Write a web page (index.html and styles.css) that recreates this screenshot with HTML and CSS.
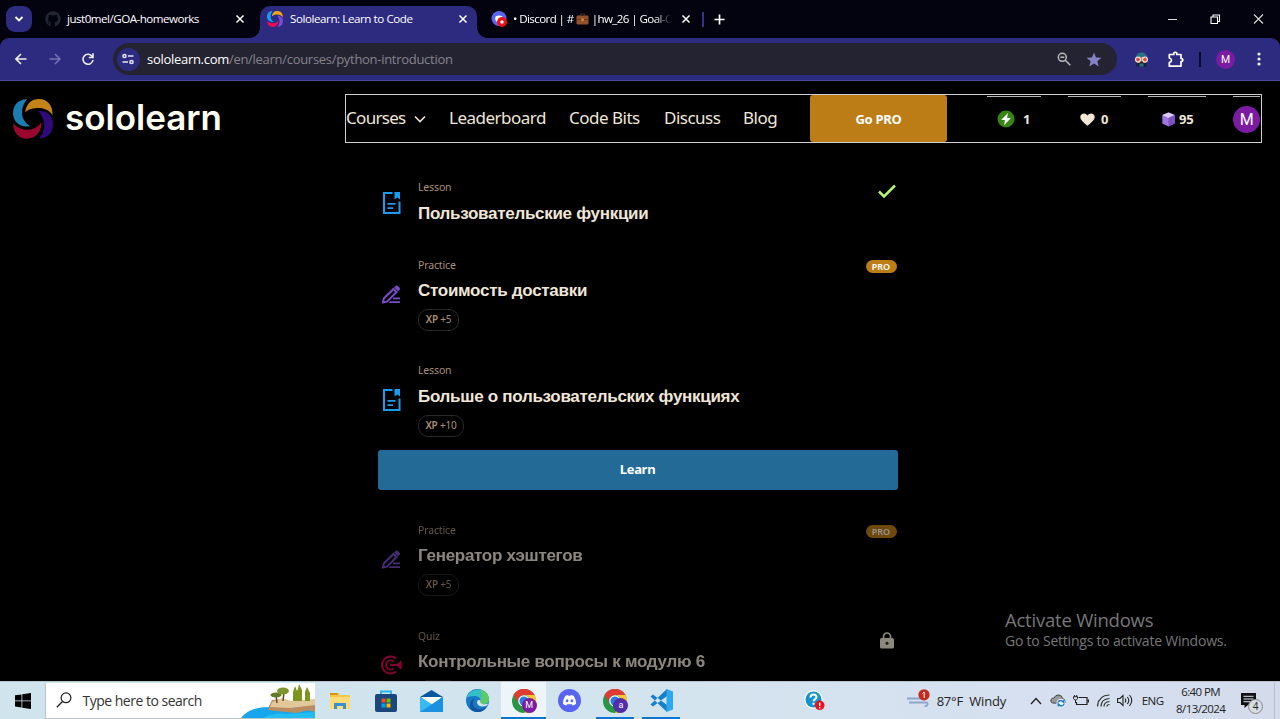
FILE: index.html
```html
<!DOCTYPE html>
<html lang="en">
<head>
<meta charset="utf-8">
<title>Sololearn: Learn to Code</title>
<link rel="stylesheet" href="styles.css">
</head>
<body>
<svg class="defs" width="0" height="0">
  <defs>
    <symbol id="swirl" viewBox="0 0 40 40">
      <path class="sw-a" d="M14 .3C5 0 0 7 0 14c0 9 8 15.500 17 13C11 23 9 18.500 9 13.500 9 8 11 4 14 .3z"/>
      <path class="sw-b" d="M12 13.500C13.500 4 19 0 26 0c9 0 14 7 13.500 16C36 11 31 9 26 9 20 9 15.500 10 12 13.500z"/>
      <path class="sw-c" d="M25 12C34 11 40 17 40 25c0 9-6 14.500-14 14.500C30.500 34 32 29 31 23.500 30 18 28 14.500 25 12z"/>
      <path class="sw-d" d="M0 24.500c5 5 11 6.700 16 6.200 5-.5 9.500-3 12.300-7.200C29 32 23 39.500 14 39.800 6 40 .5 33.500 0 24.500z"/>
    </symbol>
    <symbol id="close" viewBox="0 0 10 10"><path d="M1.500 1.500l7 7M8.500 1.500l-7 7" fill="none" stroke="currentColor" stroke-width="1.500"/></symbol>
    <symbol id="book" viewBox="0 0 18 22">
      <path d="M9.500 1H1v20h15.500V9.500" fill="none" stroke="currentColor" stroke-width="2"/>
      <path d="M11.500 0H17v7.500l-2.700-2-2.800 2zM4.500 11h8v1.800h-8zM4.500 15.200h5.500V17H4.500z" fill="currentColor"/>
    </symbol>
    <symbol id="pencil" viewBox="0 0 20 20">
      <path d="M2 17.500l.8-4L12.500 4 15.500 7 6 16.700z" fill="none" stroke="currentColor" stroke-width="2"/>
      <path d="M13 2.500L15 .7q.8-.6 1.600.1L18.800 3q.6.800 0 1.500L17 6.300zM12 12.500h7v1.800h-7zM9 16.200h10V18H7.500z" fill="currentColor"/>
    </symbol>
    <symbol id="chrome" viewBox="0 0 24 24">
      <circle cx="12" cy="12" r="12" fill="#279746"/>
      <path d="M1.500 6A12 12 0 0 1 22.500 6H12a6 6 0 0 0-5.500 8.500z" fill="#df3b32"/>
      <path d="M22.500 6A12 12 0 0 1 12 24l5.500-9.500A6 6 0 0 0 12 6z" fill="#fbc62d"/>
      <circle cx="12" cy="12" r="5.800" fill="#fff"/><circle cx="12" cy="12" r="4.600" fill="#2a7ae4"/>
    </symbol>
    <symbol id="discord" viewBox="0 0 24 24">
      <circle cx="12" cy="12" r="12" fill="#5865f2"/>
      <path d="M7.500 7.300q2-1 3-1l.5.8h2l.5-.8q1 0 3 1 2.500 4 2.300 8-1.500 1.500-3.500 1.900l-.8-1.400h-5l-.8 1.400q-2-.4-3.500-1.900-.2-4 2.300-8z" fill="#fff"/>
      <ellipse cx="9.500" cy="12.300" rx="1.400" ry="1.600" fill="#5865f2"/><ellipse cx="14.500" cy="12.300" rx="1.400" ry="1.600" fill="#5865f2"/>
    </symbol>
  </defs>
</svg>

<div class="screen">
  <header class="tabstrip">
    <div class="tab-search"><svg width="10" height="8" viewBox="0 0 10 8"><path d="M1.500 2l3.500 3.500L8.500 2" fill="none" stroke="#fff" stroke-width="1.800"/></svg></div>
    <div class="tab tab-github">
      <svg width="16" height="16" viewBox="0 0 16 16"><path fill="#20272f" d="M8 .3a7.700 7.700 0 0 0-2.500 15c.4.100.5-.2.500-.4v-1.500c-2 .4-2.600-.9-2.700-1.300-.2-.4-.6-1-.9-1.200.9-.2 1.400.5 1.700 1 .6 1 1.400.9 2 .6.100-.5.300-.8.500-1-1.800-.2-3.500-.9-3.500-3.700 0-.8.300-1.500.8-2-.1-.2-.4-1 .1-2 1 0 1.600.4 2.100.8a7 7 0 0 1 3.800 0c1.200-.8 2.100-.8 2.100-.8.500 1 .2 1.800.1 2 .5.500.8 1.200.8 2 0 2.900-1.700 3.500-3.500 3.700.3.300.5.700.5 1.500v1.900c0 .2.100.5.600.4A7.700 7.700 0 0 0 8 .3z"/></svg>
      <span class="tab-title t1">just0mel/GOA-homeworks</span>
      <svg class="x" width="10" height="10"><use href="#close"/></svg>
    </div>
    <div class="tab tab-active">
      <svg class="bright" width="16" height="16"><use href="#swirl"/></svg>
      <span class="tab-title t2">Sololearn: Learn to Code</span>
      <svg class="x" width="10" height="10"><use href="#close"/></svg>
    </div>
    <div class="tab tab-discord">
      <svg width="17" height="17" viewBox="0 0 17 17"><circle cx="8" cy="7.500" r="7.500" fill="#5865f2"/><path d="M4.500 5.500q3.500-2 7 0v3h-4v2H5q-1.500-2-.5-5z" fill="#fff"/><circle cx="11" cy="11" r="5" fill="#ed1016"/><circle cx="11" cy="11" r="1.700" fill="#fff"/></svg>
      <span class="tab-title t3">• Discord | #<svg class="case" width="13" height="12" viewBox="0 0 13 12"><path d="M4.500 2.500V1h4v1.500" fill="none" stroke="#4a2a1a" stroke-width="1"/><rect x=".5" y="2.500" width="12" height="9" rx="1.200" fill="#93512b"/><path d="M.5 6h12v1H.5z" fill="#6a3518"/><rect x="5.300" y="5.500" width="2.500" height="2.500" fill="#c98d3f"/></svg>|hw_26 | Goal-O</span>
      <svg class="x" width="10" height="10"><use href="#close"/></svg>
    </div>
    <span class="tab-sep"></span>
    <svg class="plus" width="11" height="11" viewBox="0 0 11 11"><path d="M5.500.5v10M.5 5.500h10" stroke="#fff" stroke-width="1.700"/></svg>
    <div class="win-controls">
      <svg width="11" height="11" viewBox="0 0 11 11"><path d="M1 5.500h9" stroke="#ddd"/></svg>
      <svg width="11" height="11" viewBox="0 0 11 11"><path d="M1 3h6.500v6.500H1zM3 3V1h6.500v6.500H7.500" fill="none" stroke="#fff" stroke-width="1.100"/></svg>
      <svg width="11" height="11" viewBox="0 0 11 11"><path d="M1 .5l9 9M10 .5l-9 9" stroke="#ddd" stroke-width="1.100"/></svg>
    </div>
  </header>

  <div class="toolbar">
    <div class="nav-buttons">
      <svg width="12" height="12" viewBox="0 0 12 12"><path d="M11.500 6H1.500M6 1L1 6l5 5" fill="none" stroke="#eee" stroke-width="1.600"/></svg>
      <svg width="12" height="12" viewBox="0 0 12 12"><path d="M.5 6h10M6 1l5 5-5 5" fill="none" stroke="#7773b3" stroke-width="1.500"/></svg>
      <svg width="12" height="12" viewBox="0 0 12 12"><path d="M10.200 3.500A5 5 0 1 0 11 7M11 .3V4.500H6.800" fill="none" stroke="#eee" stroke-width="1.600"/></svg>
    </div>
    <div class="omnibox">
      <span class="site-info"><svg width="12" height="12" viewBox="0 0 12 12" fill="none" stroke="#e6e6f5" stroke-width="1.500"><circle cx="2.500" cy="3" r="1.600"/><path d="M6 3h5.500M.5 9H6"/><circle cx="9.500" cy="9" r="1.600"/></svg></span>
      <span class="url"><b>sololearn.com</b>/en/learn/courses/python-introduction</span>
      <svg class="zoom" width="14" height="14" viewBox="0 0 14 14"><circle cx="5.300" cy="5.300" r="4" fill="none" stroke="#bbb" stroke-width="1.500"/><path d="M8.300 8.300l5 5M3.300 5.300h4" stroke="#bbb" stroke-width="1.500"/></svg>
      <svg class="star" width="16" height="15" viewBox="0 0 16 15"><path fill="#8583c5" d="M8 .5l2 5 5.500.3-4.200 3.500 1.400 5.200L8 11.600l-4.700 2.900 1.400-5.200L.5 5.800 6 5.500z"/></svg>
    </div>
    <svg class="ext" width="15" height="15" viewBox="0 0 15 15"><path d="M2 6Q2 .5 7.500.5T13 6z" fill="#2b7184"/><path d="M3 5h9v6H3z" fill="#c9875e"/><circle cx="4" cy="7.500" r="3" fill="#eee"/><circle cx="11" cy="7.500" r="3" fill="#eee"/><circle cx="4" cy="7.500" r="1.900" fill="#d95342"/><circle cx="11" cy="7.500" r="1.900" fill="#d95342"/><path d="M2.500 11l3 0 1-1.500h2l1 1.500 3 0v3.500h-10z" fill="#17202a"/><path d="M5.500 11.500h4v3h-4z" fill="#2b7184"/></svg>
    <svg class="puzzle" width="16" height="17" viewBox="0 0 16 17"><path d="M1.300 3.500H5.800Q5.500 1.300 7.300 1.300T8.800 3.500H13V7.500q1.800 0 1.800 1.500T13 10.500v4.700H1.300V11.500q2.200-.5 2.200-2.200T1.300 7z" fill="none" stroke="#fff" stroke-width="1.700" stroke-linejoin="round"/></svg>
    <span class="tb-sep"></span>
    <span class="avatar sm">M</span>
    <svg class="dots" width="4" height="14" viewBox="0 0 4 14" fill="#eee"><circle cx="2" cy="2" r="1.600"/><circle cx="2" cy="7" r="1.600"/><circle cx="2" cy="12" r="1.600"/></svg>
  </div>

  <main class="page">
    <div class="site-head">
      <svg class="logo" width="40" height="40"><use href="#swirl"/></svg>
      <span class="wordmark">sololearn</span>
      <nav class="menu">
        <span class="m1">Courses</span>
        <svg class="chev" width="12" height="8" viewBox="0 0 12 8"><path d="M1 1.500l5 5 5-5" fill="none" stroke="#eee5d8" stroke-width="1.600"/></svg>
        <span class="m2">Leaderboard</span>
        <span class="m3">Code Bits</span>
        <span class="m4">Discuss</span>
        <span class="m5">Blog</span>
        <span class="gopro">Go PRO</span>
        <span class="stat s1"><svg width="18" height="18" viewBox="0 0 18 18"><circle cx="9" cy="9" r="8.500" fill="#388414"/><path d="M11 3L4.300 9.800l3.700.5L7 15.200l6.800-7-3.800-.5z" fill="#fff"/></svg>1</span>
        <span class="stat s2"><svg width="15" height="13" viewBox="0 0 15 13"><path fill="#f3e7d6" d="M7.500 12.800C3 9 .3 6.800.3 4 .3 0 5.500-.9 7.500 2.500 9.500-.9 14.700 0 14.700 4c0 2.800-2.700 5-7.200 8.800z"/></svg>0</span>
        <span class="stat s3"><svg width="13" height="15" viewBox="0 0 13 15"><path d="M6.500.5L12.700 3v8.500l-6.200 3-6.200-3V3z" fill="#9e75df"/><path d="M6.500.5L12.700 3 6.500 6 .3 3z" fill="#dccaf6"/><path d="M6.500 6l6.200-3v8.500l-6.200 3z" fill="#7d50c4"/></svg>95</span>
        <span class="stat s4"><span class="avatar lg">M</span></span>
      </nav>
    </div>

    <div class="lessons">
      <section class="item i1">
        <svg class="kind book" width="18" height="22"><use href="#book"/></svg>
        <div class="body"><small>Lesson</small><h3>Пользовательские функции</h3></div>
        <svg class="check" width="18" height="14" viewBox="0 0 18 14"><path d="M1 7.500l5 5L17 1.500" fill="none" stroke="#b6f471" stroke-width="2.500"/></svg>
      </section>
      <section class="item i2">
        <svg class="kind pencil" width="20" height="20"><use href="#pencil"/></svg>
        <div class="body"><small>Practice</small><h3>Стоимость доставки</h3><span class="xp"><b>XP</b> +5</span></div>
        <span class="pro">PRO</span>
      </section>
      <section class="item i3">
        <svg class="kind book" width="18" height="22"><use href="#book"/></svg>
        <div class="body"><small>Lesson</small><h3>Больше о пользовательских функциях</h3><span class="xp wide"><b>XP</b> +10</span></div>
      </section>
      <div class="learn">Learn</div>
      <section class="item i4 locked">
        <svg class="kind pencil" width="20" height="20"><use href="#pencil"/></svg>
        <div class="body"><small>Practice</small><h3>Генератор хэштегов</h3><span class="xp"><b>XP</b> +5</span></div>
        <span class="pro">PRO</span>
      </section>
      <section class="item i5 locked">
        <svg class="kind quiz" width="22" height="20" viewBox="0 0 22 20"><path d="M15 3.500A8.500 8.500 0 1 0 15 16.500M12.500 6.500A4.500 4.500 0 1 0 12.500 13.500M9 10h8" fill="none" stroke="currentColor" stroke-width="2"/><path d="M15 10l4.500-4.300 1 .3v2.500L22 9l-2 1 2 1-1.500.5V14l-1 .3z" fill="currentColor"/></svg>
        <div class="body"><small>Quiz</small><h3>Контрольные вопросы к модулю 6</h3><span class="xp-edge"></span></div>
        <svg class="lock" width="14" height="17" viewBox="0 0 14 17"><path d="M3.500 7V4.500a3.500 3.500 0 0 1 7 0V7" fill="none" stroke="#ada79c" stroke-width="1.700"/><rect y="6" width="14" height="10.500" rx="1.500" fill="#ada79c"/><circle cx="7" cy="11.200" r="1.500" fill="#222"/></svg>
      </section>
    </div>
    <div class="watermark"><div class="wm1">Activate Windows</div><div class="wm2">Go to Settings to activate Windows.</div></div>
  </main>

  <footer class="taskbar">
    <div class="start"><svg width="16" height="16" viewBox="0 0 16 16"><path d="M0 2.300l6.500-.9v6.100H0zM7.300 1.300L16 0v7.500H7.300zM0 8.300h6.500v6.200L0 13.600zM7.300 8.300H16V16l-8.700-1.300z" fill="#000"/></svg></div>
    <div class="search">
      <svg class="mag" width="16" height="16" viewBox="0 0 16 16"><circle cx="10" cy="5.800" r="4.900" fill="none" stroke="#222" stroke-width="1.200"/><path d="M6.500 9.500L.8 15.200" stroke="#222" stroke-width="1.300"/></svg>
      <span class="hint">Type here to search</span>
      <svg class="isle" width="74" height="36" viewBox="0 0 74 36">
        <path d="M0 36Q8 25 28 25L74 24v12z" fill="#17a5ec"/>
        <path d="M22 36q10-6 24-4l28-2v6z" fill="#23bdf2"/>
        <path d="M28 24l3-6 10-1 10 3 23-2v12q-8-3-14 0l-6 1-27-3z" fill="#b98c62"/>
        <path d="M31 20l10-4 9 3 24-2v6l-25 3-20-1z" fill="#e2c79b"/>
        <path d="M36 21l-1-8M42 19l1-9" stroke="#704023" stroke-width="1.500"/>
        <ellipse cx="35" cy="13" rx="5.500" ry="2.500" fill="#607b23"/><ellipse cx="42" cy="9" rx="6" ry="3.500" fill="#7c962b"/>
        <path d="M52 19V10l2-6 2 5 1-2 1-5 3 6v11zM64 19v-9l2-5 3 6v8z" fill="#7d941e"/>
      </svg>
    </div>
    <div class="apps">
      <div class="app"><svg width="20" height="18" viewBox="0 0 20 18"><path d="M0 1h8l2 2h10v14H0z" fill="#f7c64b"/><path d="M0 1h8v2H0z" fill="#d99412"/><path d="M0 5h20v12H0z" fill="#ffdc78"/><path d="M4 17v-6h12v6h-3v-3H7v3z" fill="#3a8fd0"/></svg></div>
      <div class="app"><svg width="22" height="22" viewBox="0 0 22 22"><path d="M6 5V1.500h10V5" fill="none" stroke="#28b6ee" stroke-width="2"/><rect y="4" width="22" height="18" rx="2" fill="#1b477d"/><path d="M6.500 8.500h4v4h-4z" fill="#f25022"/><path d="M11.500 8.500h4v4h-4z" fill="#7fba00"/><path d="M6.500 13.500h4v4h-4z" fill="#00a4ef"/><path d="M11.500 13.500h4v4h-4z" fill="#ffb900"/></svg></div>
      <div class="app"><svg width="23" height="22" viewBox="0 0 23 22"><path d="M0 7L11.500 0 23 7v3H0z" fill="#0b579e"/><path d="M0 7h23v15H0z" fill="#259fe6"/><path d="M1 7h21L11.500 15z" fill="#fff"/><path d="M0 7l15 9 8 6H0z" fill="#39baf2"/><path d="M23 7L0 22h23z" fill="#1b91df"/></svg></div>
      <div class="app"><svg width="23" height="23" viewBox="0 0 23 23"><circle cx="11.500" cy="11.500" r="11.500" fill="#1879c5"/><path d="M.5 8.500C4-2 21-3 23 10c.3 4-3 5.500-7 5-3-.5-1-2-1.500-4C14 8 11 7 8.500 7 5 7 2 8 .5 8.500z" fill="#34bfc8"/><path d="M14 .5q9 3 9 10-1 5-7 4.500-3-1-1.500-3Q17 7 14 .5z" fill="#5fcb63"/><path d="M8.500 9.500q-4 6 1 9.500 5 3 11-1-3 5-9 5-9.500-1-7-10 1-3 4-3.500z" fill="#1555a0"/><path d="M14.500 11.500q-1 2 1.500 3.500 3 .8 6-.5l-.8 2q-8 3-10.200-2.500 0-4 3.500-2.500z" fill="#d3e5ef"/></svg></div>
      <div class="app current running"><svg width="24" height="24"><use href="#chrome"/></svg><span class="badge">M</span></div>
      <div class="app"><svg width="23" height="23"><use href="#discord"/></svg></div>
      <div class="app running"><svg width="24" height="24"><use href="#chrome"/></svg><span class="badge alt">a</span></div>
      <div class="app running"><svg width="23" height="23" viewBox="0 0 23 23"><path d="M17 0v7L3 17.500.5 15.500zM17 23v-7L3 5.500.5 7.500z" fill="#1680c8"/><path d="M16.500 0L23 2.500v18L16.500 23z" fill="#2ba8ee"/></svg></div>
    </div>
    <svg class="help" width="21" height="21" viewBox="0 0 21 21"><circle cx="9.500" cy="9.500" r="9.300" fill="#fff"/><circle cx="9.500" cy="9.500" r="8" fill="#1493cd"/><path d="M6.500 7.500q0-3 3-3t3 2.600c0 2-3 2-3 4.200M9.500 12.700v2" fill="none" stroke="#fff" stroke-width="2"/><circle cx="15.700" cy="15.300" r="4.800" fill="#e8131d"/><path d="M15.700 12.500v3.500M15.700 17v1.500" stroke="#fff" stroke-width="1.400"/></svg>
    <svg class="wind" width="23" height="19" viewBox="0 0 23 19"><path d="M0 9.500h18M2 13.500h17q2 0 1.500 2t-3 1.500" fill="none" stroke="#8ba6c9" stroke-width="1.900"/><circle cx="17" cy="5.800" r="5.600" fill="#c42b1c"/><path d="M15.500 4.500L17.200 3v6" fill="none" stroke="#fff" stroke-width="1"/></svg>
    <span class="weather">87°F&nbsp; Windy</span>
    <svg class="up" width="12" height="8" viewBox="0 0 12 8"><path d="M1 7l5-5.500L11 7" fill="none" stroke="#222" stroke-width="1.300"/></svg>
    <svg class="cloud" width="16" height="14" viewBox="0 0 16 14"><path d="M2.500 9Q0 8 1 5.500 2 4 4 4q1.500-3.500 5-3 3 .4 3.500 3.500 2.500.5 2.500 3v2z" fill="#999" stroke="#444"/><circle cx="11" cy="9.300" r="4.500" fill="#e9f2fa"/><path d="M7.800 8.500q2.500-4 6 0V6M14.200 10q-2.500 4-6 0v2.500" fill="none" stroke="#1779cf" stroke-width="1.300"/></svg>
    <svg class="batt" width="16" height="11" viewBox="0 0 16 11"><path d="M5.500 2.500h8.500v7H3.500V7" fill="none" stroke="#222" stroke-width="1.200"/><path d="M14.500 4.500H16v3h-1.500z" fill="#222"/><path d="M.5 1.700h4v1.800q-.5 1.500-2 1.500t-2-1.500zM1.500 0v1.500M3.700 0v1.500M2.500 5v3" fill="none" stroke="#222" stroke-width="1"/></svg>
    <svg class="wifi" width="13" height="13" viewBox="0 0 13 13" fill="none" stroke="#333" stroke-width="1.200"><path d="M.5 12.500Q1 1.500 12.500 1"/><path d="M4 12.500Q4 5 12.500 4.500"/><path d="M7 12.500Q7 8 12.500 7.500M10 12.500q0-2 2.500-2"/></svg>
    <svg class="vol" width="16" height="13" viewBox="0 0 16 13" fill="none" stroke="#222" stroke-width="1.100"><path d="M.6 4.500H3l3-3v10l-3-3H.6zM8 4.500q1.500 2 0 4M10.300 3q3 3.500 0 7M12.500 1q4.500 5.500 0 11"/></svg>
    <span class="lang">ENG</span>
    <div class="clock"><span class="c1">6:40 PM</span><span class="c2">8/13/2024</span></div>
    <div class="notes"><svg width="22" height="22" viewBox="0 0 22 22"><path d="M0 0h15v12H7l-3.500 3V12H0z" fill="#111"/><path d="M2.500 3.300h10M2.500 6h10M2.500 8.700h7" stroke="#dfe6f3" stroke-width="1"/></svg><span class="count">4</span></div>
    <span class="peek"></span>
  </footer>
</div>
</body>
</html>
```
FILE: styles.css
```css
* { box-sizing: border-box; }
body { margin: 0; background: #000; overflow: hidden; }
svg { display: block; flex: none; }
span { white-space: nowrap; flex: none; }
.defs { position: absolute; }
.screen { width: 1280px; height: 719px; display: flex; flex-direction: column; font-family: "Open Sans", sans-serif; }

.sw-a { fill: var(--a, #1b7db0); }
.sw-b { fill: var(--b, #c48316); }
.sw-c { fill: var(--c, #300a7c); }
.sw-d { fill: var(--d, #9b0630); }
.bright { --a: #149ef2; --b: #f6a51f; --c: #7a4bd8; --d: #f00a55; }

/* Browser chrome */
.tabstrip { position: relative; z-index: 1; height: 38px; flex: none; display: flex; align-items: center; background: #03030f; color: #fff; }
.tab-search { width: 26px; height: 26px; margin-left: 6px; border-radius: 9px; background: #2d2c80; display: grid; place-items: center; }
.tab { height: 32px; margin-top: 6px; padding-bottom: 6px; display: flex; align-items: center; }
.tab-title { margin-left: 7px; font-size: 11.600px; line-height: 18px; }
.tab .x { margin-left: auto; }
.tab-github { width: 200px; margin-left: 13px; }
.tab-active { position: relative; width: 217px; margin-left: 15px; padding-left: 7px; padding-right: 9px; border-radius: 10px 10px 0 0; background: #2c2b80; }
.tab-active::before, .tab-active::after { content: ""; position: absolute; bottom: 0; width: 10px; height: 10px; }
.tab-active::before { left: -10px; background: radial-gradient(circle at 0 0, #03030f 9.500px, #2c2b80 10px); }
.tab-active::after { right: -10px; background: radial-gradient(circle at 100% 0, #03030f 9.500px, #2c2b80 10px); }
.tab-discord { width: 200px; margin-left: 14px; }
.tab-github .t1 { margin-left: 6px; letter-spacing: -.5px; }
.t2 { letter-spacing: -.43px; }
.t3 { width: 158px; margin-left: 5px; letter-spacing: -.6px; mask-image: linear-gradient(90deg, #000 90%, transparent 100%); }
.case { display: inline-block; vertical-align: -2px; margin: 0 3px 0 2px; }
.tab-sep { width: 1.500px; height: 15px; margin-left: 11px; background: #34328d; }
.plus { margin-left: 10px; }
.win-controls { display: flex; gap: 32px; margin-left: auto; margin-right: 16px; }

.toolbar { height: 43px; flex: none; display: flex; align-items: center; background: #2c2b80; border-radius: 9px 9px 0 0; border-bottom: 1px solid #4b4990; }
.nav-buttons { display: flex; gap: 22px; margin-left: 15px; }
.nav-buttons svg:nth-child(n+2) { margin-left: -.5px; }
.omnibox { width: 1004px; height: 32px; margin-left: 18.500px; padding-left: 4px; display: flex; align-items: center; border-radius: 16px; background: #242331; }
.site-info { width: 23px; height: 23px; border-radius: 50%; background: #2c2b80; display: grid; place-items: center; }
.url { width: 306px; margin-left: 7.500px; font-size: 13px; letter-spacing: -.29px; color: #85848d; }
.url b { font-weight: 400; color: #fff; }
.zoom { margin-left: 604px; }
.star { margin-left: 15px; }
.ext { margin-left: 17px; }
.puzzle { margin-left: 19.500px; }
.tb-sep { width: 2px; height: 15px; margin-left: 15px; background: #0b0a26; }
.avatar { border-radius: 50%; background: #7a1ba2; color: #fff; display: grid; place-items: center; font-family: Roboto, sans-serif; }
.avatar.sm { width: 19px; height: 19px; margin-left: 15px; font-size: 10.500px; }
.avatar.lg { width: 27px; height: 27px; font-size: 16px; }
.dots { margin-left: 22px; }

/* Site */
.page { position: relative; height: 600px; flex: none; overflow: hidden; background: #000; color: #f0e6d8; font-family: "Noto Sans", sans-serif; }
.site-head { height: 76px; display: flex; align-items: center; }
.logo { margin-left: 13px; }
.wordmark { width: 156px; margin-left: 12px; margin-top: -5px; color: #fffff1; font: 600 35px/40px "Inter", sans-serif; letter-spacing: 0; }
.menu { width: 917px; height: 49px; margin-left: 124px; border: 1px solid #cfcfcf; display: flex; align-items: center; font-size: 17px; position: relative; top: -.5px; }
.menu > span { display: flex; }
.menu > .m1, .menu > .m2, .menu > .m3, .menu > .m4, .menu > .m5 { font-family: "Noto Sans", sans-serif; letter-spacing: -.5px; line-height: 24px; margin-top: -2px; }
.menu > .m1 { width: 61px; letter-spacing: -.7px; }
.chev { margin-left: 7px; }
.m2 { width: 97px; margin-left: 23px; }
.m3 { width: 73px; margin-left: 23px; }
.m4 { width: 57px; margin-left: 22px; }
.m5 { width: 35px; margin-left: 22px; }
.menu .gopro { width: 137px; height: 47px; margin-left: 32px; align-items: center; justify-content: center; background: #bd7d16; border-radius: 3px; color: #fff; font-size: 13px; font-weight: 700; letter-spacing: -.3px; }
.menu .stat { height: 45px; margin-top: 0; align-items: center; border-top: 1px solid #b5b5b5; font-size: 13px; font-weight: 700; letter-spacing: -.3px; }
.menu .s1 { width: 54px; margin-left: 40px; padding-left: 10px; gap: 8px; }
.menu .s2 { width: 53px; margin-left: 27px; padding-left: 12px; gap: 6px; }
.menu .s3 { width: 58px; margin-left: 27px; padding-left: 14px; gap: 4px; }
.menu .s4 { width: 27px; margin-left: 27px; font-weight: 400; }

.lessons { width: 520px; margin: 23px 0 0 377.500px; }
.item { display: flex; }
.i1 { height: 78px; }
.i2 { height: 105px; }
.i3 { height: 87px; }
.i4 { height: 106px; margin-top: 33px; }
.i5 { height: 70px; }
.book { width: 18px; margin: 12px 2px 0 5px; color: #199cf0; }
.pencil { width: 20px; margin: 27px 2px 0 3px; color: #7b4cc9; }
.i3 .book { margin-top: 26px; }
.quiz { margin: 26px 0 0 3px; color: #e00657; }
.body { display: flex; flex-direction: column; align-items: flex-start; margin-left: 15.500px; }
small { font-size: 10.500px; line-height: 14px; color: #a98f78; letter-spacing: -.15px; }
h3 { margin: 9px 0 0; font: 700 17px/22px "Liberation Sans", sans-serif; letter-spacing: -.29px; white-space: nowrap; }
.i2 h3, .i4 h3, .i5 h3 { margin-top: 8px; }
.xp { width: 41px; height: 22px; margin-top: 7px; border: 1px solid #29292b; border-radius: 10px; font-size: 10px; line-height: 19px; text-align: center; color: #aa9078; letter-spacing: -.2px; }
.xp b { font-weight: 600; }
.xp.wide { width: 46px; margin-top: 6.500px; }
.xp-edge { width: 26px; margin: 7px 0 0 7px; height: 1px; background: #29292b; }
.check { margin: 4px 2px 0 auto; }
.pro { width: 31px; height: 13px; margin: 2px 1px 0 auto; border-radius: 7px; background: #bd7d16; color: #fff; font-size: 9px; font-weight: 600; line-height: 13px; text-align: center; }
.lock { margin: 3px 4px 0 auto; filter: brightness(1.400); }
.learn { height: 40px; border-radius: 3px; background: #246a96; color: #fff; text-align: center; font-size: 13px; font-weight: 700; line-height: 38px; letter-spacing: -.3px; }
.locked { opacity: .58; }
.watermark { position: absolute; left: 1005px; top: 526px; color: #777; font-family: "Open Sans", sans-serif; white-space: nowrap; }
.wm1 { font-size: 18.500px; line-height: 26px; letter-spacing: -.22px; }
.wm2 { font-size: 14px; line-height: 16px; letter-spacing: -.22px; }

/* Taskbar */
.taskbar { height: 38px; flex: none; display: flex; align-items: center; background: linear-gradient(90deg, #cfe4ec, #d3e4ee 50%, #d6e0f0 80%, #d4dcec); border-top: 1px solid #b5c4cc; color: #222; }
.start { width: 45px; display: grid; place-items: center; }
.search { width: 270px; height: 36px; display: flex; align-items: center; background: #fff; border: 1px solid #b8c6cc; border-width: 0 0 1px 1px; }
.mag { margin-left: 10px; }
.hint { width: 120px; margin-left: 10.500px; font-size: 14px; letter-spacing: -.5px; color: #333; }
.isle { margin-left: auto; }
.apps { display: flex; height: 37px; margin-left: 2px; }
.app { position: relative; width: 45.900px; display: grid; place-items: center; }
.app.current { background: #edf5fa; }
.running::after { content: ""; position: absolute; left: 4px; right: 4px; bottom: 0; height: 2px; background: #0a76d2; }
.current::after { left: 0; right: 0; }
.badge { position: absolute; left: 21px; top: 16px; width: 15px; height: 15px; border-radius: 50%; background: #7a1ba2; color: #fff; font: 9px/15px Roboto, sans-serif; text-align: center; }
.alt { background: #512da8; }
.help { margin-left: 120px; }
.wind { margin-left: 81.500px; margin-top: -5px; }
.weather { width: 72px; margin-left: 7px; font-size: 13px; letter-spacing: -.2px; }
.up { margin-left: 21px; }
.cloud { margin-left: 8px; }
.batt { margin-left: 7px; }
.wifi { margin-left: 8.500px; }
.vol { margin-left: 7px; }
.lang { width: 22px; margin-left: 8.500px; font-size: 11.500px; letter-spacing: -.5px; }
.clock { width: 50px; margin-left: 12px; margin-top: -2px; display: flex; flex-direction: column; align-items: center; font-size: 11.500px; line-height: 17px; letter-spacing: -.6px; }
.notes { position: relative; width: 22px; height: 22px; margin-left: 15.500px; margin-top: 6px; }
.count { position: absolute; left: 7px; top: 6px; width: 15px; height: 15px; border: 1px solid #888; border-radius: 50%; background: #d9dce2; font-size: 10px; line-height: 13px; text-align: center; }
.peek { width: 1px; height: 37px; margin-left: 11px; background: #b8c1cf; }
```
